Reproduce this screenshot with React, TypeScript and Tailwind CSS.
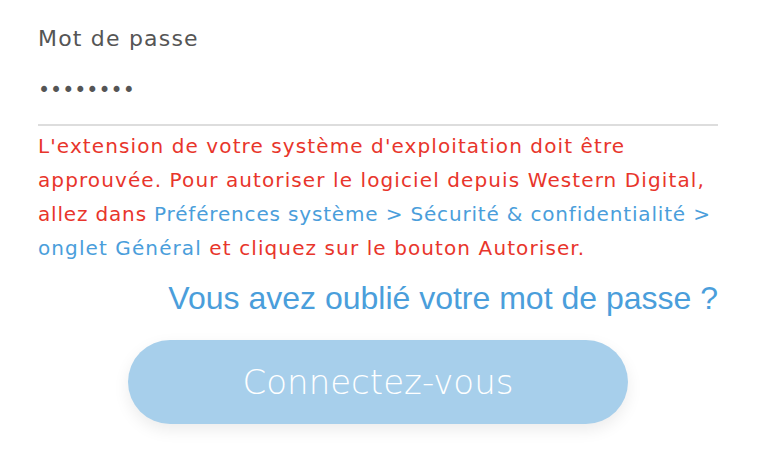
export default function App() {
  return (
    <div className="min-h-screen w-full bg-white font-['DejaVu_Sans',sans-serif]">
      <div className="w-[680px] pl-[38px] pt-[22px] box-content">
        <label
          htmlFor="password"
          className="block text-[22px] leading-[34px] tracking-[1.2px] text-[#555555]"
        >
          Mot de passe
        </label>
        <input
          id="password"
          type="password"
          readOnly
          value="12345678"
          className="mt-[22px] block w-full border-b-2 border-[#dddddd] pb-[22px] text-[20.5px] leading-[24px] text-[#555555] outline-none"
        />
        <p className="mt-[3px] whitespace-nowrap text-[20px] leading-[34px] tracking-[1.1px] text-[#e8352b]">
          L'extension de votre système d'exploitation doit être
          <br />
          approuvée. Pour autoriser le logiciel depuis Western Digital,
          <br />
          <span className="tracking-[0.83px]">
            allez dans{' '}
            <span className="text-[#4a9edb]">
              Préférences système &gt; Sécurité &amp; confidentialité &gt;
            </span>
          </span>
          <br />
          <span className="text-[#4a9edb]">onglet Général</span> et cliquez sur le bouton
          Autoriser.
        </p>
        <div className="mt-[14px] text-right font-['Liberation_Sans',sans-serif] text-[32px] leading-[38px] text-[#4a9edb]">
          Vous avez oublié votre mot de passe ?
        </div>
      </div>
      <div className="mt-[23px] flex justify-center pr-[2px]">
        <button className="h-[84px] w-[500px] rounded-full bg-[#a7cfeb] text-[34px] font-extralight text-white shadow-[0_6px_16px_rgba(0,0,0,0.08)]">
          Connectez-vous
        </button>
      </div>
    </div>
  );
}
